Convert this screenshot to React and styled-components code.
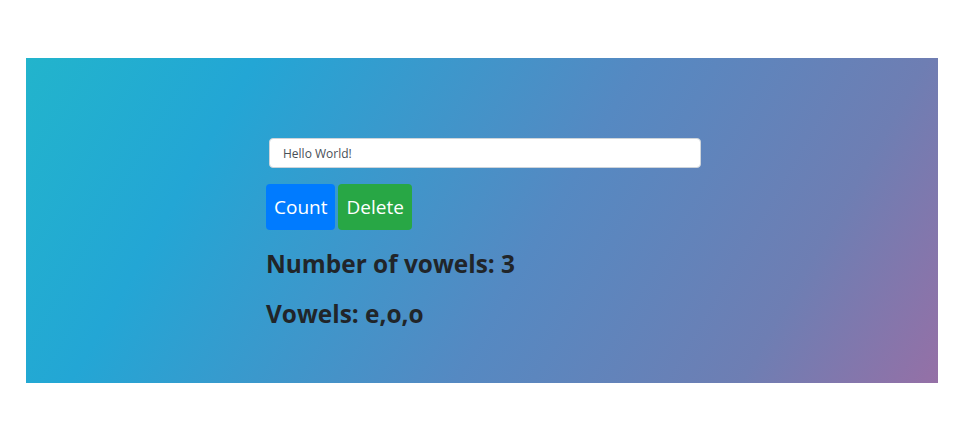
import styled, { createGlobalStyle } from 'styled-components';

const Global = createGlobalStyle`
  html, body { margin: 0; padding: 0; background: #fff; }
  body { font-family: "Open Sans", "Noto Sans", sans-serif; }
`;

const Page = styled.div`
  padding: 58px 20px 44px 26px;
`;

const Panel = styled.div`
  height: 325px;
  box-sizing: border-box;
  padding: 80px 0 0 240px;
  background: linear-gradient(120deg, #22b4cc 0%, #23a6d5 21%, #5589c2 56%, #6e7eb3 82%, #9570a6 100%);
`;

const Input = styled.input`
  display: block;
  box-sizing: border-box;
  width: 432px;
  height: 30px;
  margin: 0 0 16px 3px;
  padding: 0 13px;
  border: 1px solid #ced4da;
  border-radius: 4px;
  font-family: inherit;
  font-size: 12px;
  color: #495057;
  background: #fff;
  outline: none;
`;

const Row = styled.div`
  display: flex;
  gap: 3px;
`;

const Button = styled.button`
  height: 46px;
  padding: 0 8px;
  border: none;
  border-radius: 4px;
  font-family: inherit;
  font-size: 19px;
  color: #fff;
  background: ${(p) => (p.$variant === 'success' ? '#28a745' : '#007bff')};
  cursor: pointer;
`;

const Heading = styled.h3`
  margin: 18px 0 0;
  font-size: 24.4px;
  line-height: 32px;
  font-weight: 700;
  color: #212529;
  & + & { margin-top: 18px; }
`;

export default function App() {
  return (
    <>
      <Global />
      <Page>
        <Panel>
          <Input defaultValue="Hello World!" />
          <Row>
            <Button>Count</Button>
            <Button $variant="success">Delete</Button>
          </Row>
          <Heading>Number of vowels: 3</Heading>
          <Heading>Vowels: e,o,o</Heading>
        </Panel>
      </Page>
    </>
  );
}
